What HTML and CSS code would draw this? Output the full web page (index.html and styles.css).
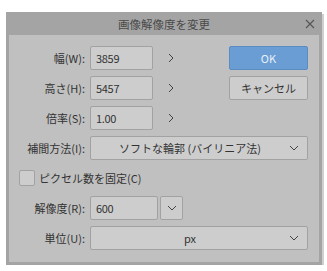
FILE: index.html
```html
<!DOCTYPE html>
<html lang="ja">
<head>
<meta charset="utf-8">
<title>画像解像度を変更</title>
<link rel="stylesheet" href="styles.css">
</head>
<body>
<div class="dialog">
  <div class="titlebar">
    <span class="title">画像解像度を変更</span>
    <svg class="close" width="10" height="10" viewBox="0 0 10 10"><path d="M1 1L9 9M9 1L1 9" stroke="#555" stroke-width="1.1" fill="none"/></svg>
  </div>
  <div class="content">
    <label class="lbl r1">幅(W):</label>
    <div class="field r1 c2">3859</div>
    <div class="chev r1"><svg width="6" height="10" viewBox="0 0 6 10"><path d="M1 1L5 5L1 9" stroke="#444" stroke-width="1" fill="none"/></svg></div>
    <button class="btn ok r1">OK</button>

    <label class="lbl r2">高さ(H):</label>
    <div class="field r2 c2">5457</div>
    <div class="chev r2"><svg width="6" height="10" viewBox="0 0 6 10"><path d="M1 1L5 5L1 9" stroke="#444" stroke-width="1" fill="none"/></svg></div>
    <button class="btn r2">キャンセル</button>

    <label class="lbl r3">倍率(S):</label>
    <div class="field r3 c2">1.00</div>
    <div class="chev r3"><svg width="6" height="10" viewBox="0 0 6 10"><path d="M1 1L5 5L1 9" stroke="#444" stroke-width="1" fill="none"/></svg></div>

    <label class="lbl r4">補間方法(I):</label>
    <div class="select r4"><span class="sel-text">ソフトな輪郭 (バイリニア法)</span><svg class="down" width="10" height="6" viewBox="0 0 10 6"><path d="M1 1L5 5L9 1" stroke="#444" stroke-width="1" fill="none"/></svg></div>

    <div class="check r5"><span class="box"></span><span>ピクセル数を固定(C)</span></div>

    <label class="lbl r6">解像度(R):</label>
    <div class="res r6"><div class="field wide">600</div><div class="dd"><svg width="10" height="6" viewBox="0 0 10 6"><path d="M1 1L5 5L9 1" stroke="#444" stroke-width="1" fill="none"/></svg></div></div>

    <label class="lbl r7">単位(U):</label>
    <div class="select r7"><span class="sel-text">px</span><svg class="down" width="10" height="6" viewBox="0 0 10 6"><path d="M1 1L5 5L9 1" stroke="#444" stroke-width="1" fill="none"/></svg></div>
  </div>
</div>
</body>
</html>
```

FILE: styles.css
```css
* { box-sizing: border-box; }
html, body { margin: 0; padding: 0; background: #ffffff; }
body {
  font-family: "Noto Sans CJK JP", "Noto Sans", sans-serif;
  font-size: 11px;
  color: #333333;
  padding: 12px 0 0 6px;
}
.dialog {
  width: 316px;
  height: 253px;
  background: #c0c0c0;
  border: 3px solid #a4a4a4;
  border-top: none;
  box-shadow: 2px 2px 0 #cfcfcf;
  display: flex;
  flex-direction: column;
}
.titlebar {
  height: 23px;
  margin: 0 -3px;
  background: #a4a4a4;
  display: flex;
  align-items: center;
  justify-content: center;
  position: relative;
}
.title {
  font-size: 11.5px;
  color: #4a4a4a;
}
.close {
  position: absolute;
  right: 7px;
  top: 7px;
}
.content {
  padding: 11px 11px 0 0;
  display: grid;
  grid-template-columns: 76px 63px 1fr 79px;
  grid-template-rows: repeat(7, 24px);
  column-gap: 5px;
  row-gap: 6px;
}
.r1 { grid-row: 1; }
.r2 { grid-row: 2; }
.r3 { grid-row: 3; }
.r4 { grid-row: 4; }
.r5 { grid-row: 5; }
.r6 { grid-row: 6; }
.r7 { grid-row: 7; }
.lbl {
  grid-column: 1;
  display: flex;
  align-items: center;
  justify-content: flex-end;
}
.field {
  grid-column: 2;
  background: #cdcdcd;
  border: 1px solid #a2a2a2;
  border-radius: 2px;
  display: flex;
  align-items: center;
  padding-left: 5px;
  letter-spacing: -0.3px;
}
.chev {
  grid-column: 3;
  display: flex;
  align-items: center;
  padding-left: 10px;
}
.btn {
  grid-column: 4;
  font: inherit;
  color: #333333;
  background: #cdcdcd;
  border: 1px solid #a2a2a2;
  border-radius: 2px;
  padding: 0;
}
.btn.ok {
  background: #6a9dd3;
  border-color: #5a8cc2;
  color: #e8f0fa;
}
.select {
  grid-column: 2 / 5;
  background: #cdcdcd;
  border: 1px solid #a2a2a2;
  border-radius: 2px;
  display: flex;
  align-items: center;
  padding: 0 8px 0 0;
}
.sel-text {
  flex: 1;
  text-align: center;
}
.down { flex: none; }
.check {
  grid-column: 1 / 5;
  display: flex;
  align-items: center;
  gap: 4px;
  padding-left: 10px;
}
.box {
  width: 16px;
  height: 16px;
  background: #cdcdcd;
  border: 1px solid #a2a2a2;
  border-radius: 2px;
}
.res {
  grid-column: 2 / 5;
  display: flex;
  gap: 2px;
}
.field.wide {
  width: 68px;
}
.dd {
  width: 23px;
  background: #cdcdcd;
  border: 1px solid #a2a2a2;
  border-radius: 2px;
  display: flex;
  align-items: center;
  justify-content: center;
}
```
